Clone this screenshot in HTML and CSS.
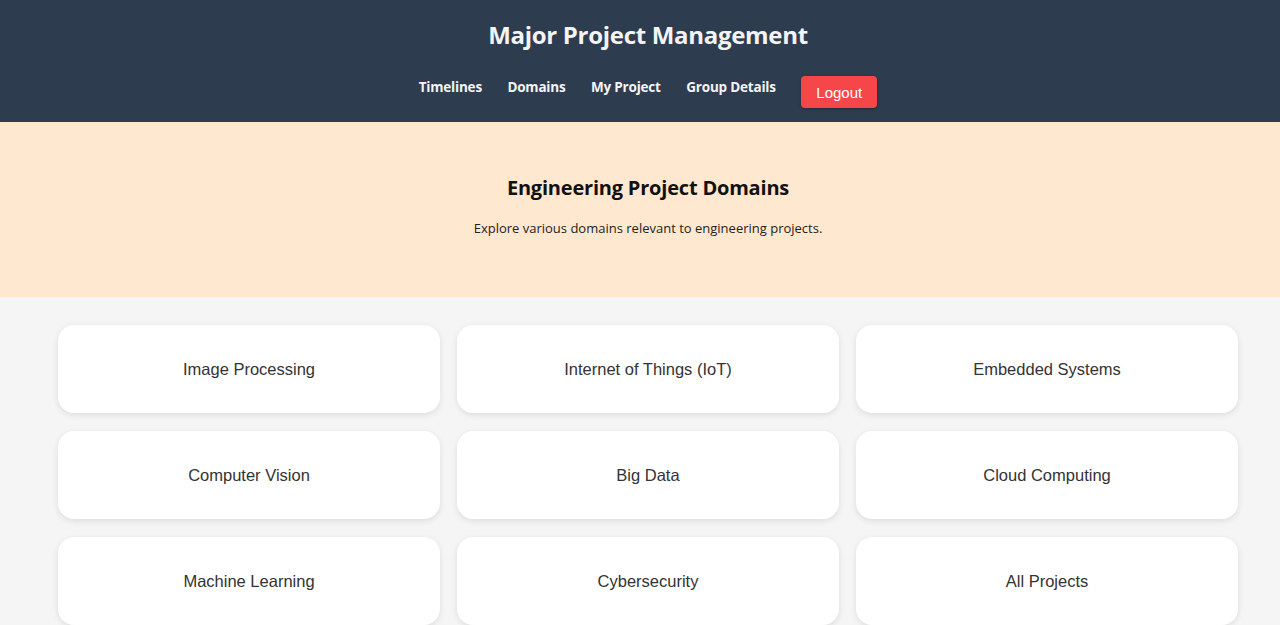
FILE: index.html
```html
<!DOCTYPE html>
<html>
<head>
<meta charset="utf-8">
<link rel="stylesheet" href="styles.css">
</head>
<body>
<header class="topbar">
  <h1 class="site-title">Major Project Management</h1>
  <nav class="nav">
    <a class="nav-link" href="#">Timelines</a>
    <a class="nav-link" href="#">Domains</a>
    <a class="nav-link" href="#">My Project</a>
    <a class="nav-link" href="#">Group Details</a>
    <button class="logout">Logout</button>
  </nav>
</header>
<section class="hero">
  <h2 class="hero-title">Engineering Project Domains</h2>
  <p class="hero-text">Explore various domains relevant to engineering projects.</p>
</section>
<main class="domains">
  <div class="card">Image Processing</div>
  <div class="card">Internet of Things (IoT)</div>
  <div class="card">Embedded Systems</div>
  <div class="card">Computer Vision</div>
  <div class="card">Big Data</div>
  <div class="card">Cloud Computing</div>
  <div class="card">Machine Learning</div>
  <div class="card">Cybersecurity</div>
  <div class="card">All Projects</div>
</main>
</body>
</html>
```
FILE: styles.css
```css
* { box-sizing: border-box; }
body {
  margin: 0;
  background: #f5f5f5;
  font-family: "Open Sans", "Noto Sans", sans-serif;
}
.topbar {
  background: #2e3c50;
  height: 122px;
  display: flex;
  flex-direction: column;
  align-items: center;
  padding: 17px 0 0 16px;
}
.site-title {
  margin: 0;
  color: #f3f4f6;
  font-size: 24px;
  font-weight: 700;
  line-height: 36px;
  letter-spacing: -0.3px;
}
.nav {
  display: flex;
  align-items: center;
  gap: 25.5px;
  margin-top: 13px;
  margin-left: 0;
}
.nav-link {
  color: #f3f4f6;
  text-decoration: none;
  font-size: 13.5px;
  font-weight: 700;
  letter-spacing: -0.2px;
}
.logout {
  background: #f5474a;
  color: #fff;
  border: none;
  border-radius: 4px;
  height: 32px;
  width: 76px;
  font-family: "Liberation Sans", Arial, sans-serif;
  font-size: 15px;
  box-shadow: 0 1px 3px rgba(0,0,0,0.3);
  margin-top: 10px;
}
.hero {
  background: #ffe8cf;
  height: 175px;
  display: flex;
  flex-direction: column;
  align-items: center;
  padding: 52px 0 0 16px;
}
.hero-title {
  margin: 0;
  font-size: 20px;
  font-weight: 700;
  color: #111;
  line-height: 28px;
  letter-spacing: -0.2px;
}
.hero-text {
  margin: 17px 0 0;
  font-size: 13px;
  color: #222;
}
.domains {
  display: grid;
  grid-template-columns: repeat(3, 382px);
  column-gap: 17px;
  row-gap: 18px;
  padding: 28px 0 0 58px;
}
.card {
  background: #fff;
  height: 88px;
  border-radius: 16px;
  box-shadow: 0 2px 6px rgba(0,0,0,0.1);
  display: flex;
  align-items: center;
  justify-content: center;
  font-family: "Liberation Sans", Arial, sans-serif;
  font-size: 16.5px;
  color: #333;
}
```
